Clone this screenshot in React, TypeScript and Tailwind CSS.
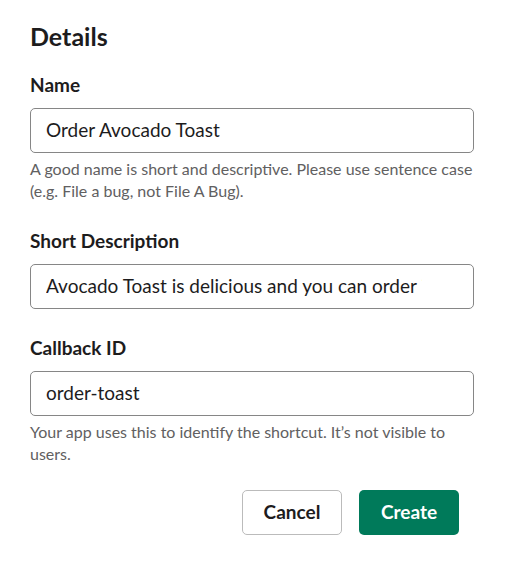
import React from "react";

function Field({ label, value, help, mt }: { label: string; value: string; help?: string; mt: string }) {
  return (
    <div className={`flex flex-col ${mt}`}>
      <label className="text-[19px] leading-[24px] font-bold text-[#1d1c1d]">{label}</label>
      <div className="mt-[11px] h-[45px] w-[444px] rounded-[5px] border border-[#868686] bg-white flex items-center pl-[15px]">
        <div className="w-[376px] overflow-hidden whitespace-nowrap text-[19px] text-[#1d1c1d]">{value}</div>
      </div>
      {help && (
        <p className="mt-[5px] w-[444px] text-[16px] leading-[22px] text-[#616061]">{help}</p>
      )}
    </div>
  );
}

export default function App() {
  return (
    <div className="w-[505px] h-[564px] bg-white pl-[30px] pt-[20px]" style={{ fontFamily: "Lato, 'Noto Sans', sans-serif" }}>
      <h1 className="text-[25px] leading-[32px] font-bold text-[#1d1c1d]">Details</h1>
      <Field
        mt="mt-[21px]"
        label="Name"
        value="Order Avocado Toast"
        help="A good name is short and descriptive. Please use sentence case (e.g. File a bug, not File A Bug)."
      />
      <Field mt="mt-[27px]" label="Short Description" value="Avocado Toast is delicious and you can order it" />
      <Field
        mt="mt-[27px]"
        label="Callback ID"
        value="order-toast"
        help="Your app uses this to identify the shortcut. It’s not visible to users."
      />
      <div className="mt-[25px] w-[429px] flex justify-end gap-[17px]">
        <button className="h-[45px] w-[100px] rounded-[5px] border border-[#bbbbbb] bg-white text-[19px] font-bold text-[#1d1c1d]">
          Cancel
        </button>
        <button className="h-[45px] w-[100px] rounded-[5px] bg-[#007a5a] text-[19px] font-bold text-white">
          Create
        </button>
      </div>
    </div>
  );
}
